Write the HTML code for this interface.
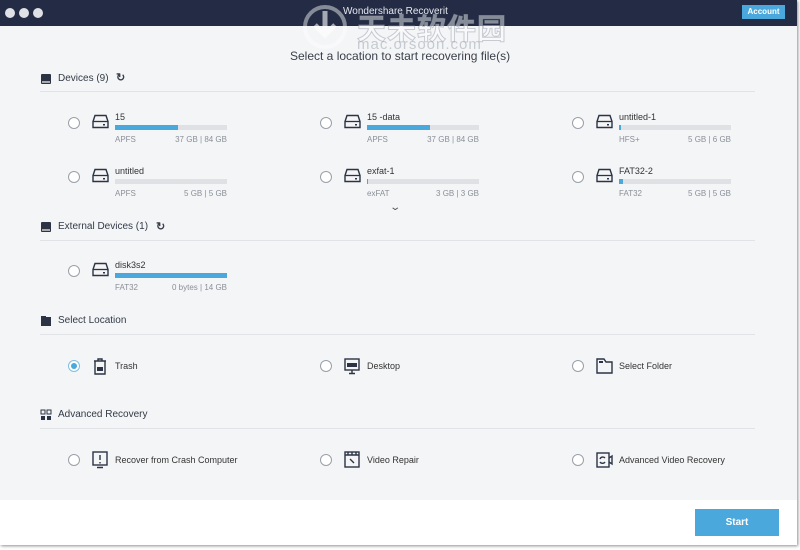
<!DOCTYPE html>
<html><head><meta charset="utf-8"><style>
*{margin:0;padding:0;box-sizing:border-box}
body{width:800px;height:550px;background:#fff;position:relative;overflow:hidden;font-family:"Liberation Sans","Noto Sans CJK SC",sans-serif;color:#3a3f4a}
#win{position:absolute;left:0;top:0;width:797px;height:545px;background:#f4f5f7;box-shadow:1px 1px 3px rgba(0,0,0,.45);overflow:hidden}
#tb{position:absolute;left:0;top:0;width:797px;height:26px;background:#232c44}
.dot{position:absolute;top:8px;width:10px;height:10px;border-radius:50%;background:#dfe1e6}
.abs{position:absolute;white-space:nowrap}
.hdr{font-size:10px;color:#333a46}
.line{position:absolute;left:40px;width:715px;height:1px;background:#e1e3e7}
.radio{position:absolute;width:12px;height:12px;border:1px solid #9aa0a8;border-radius:50%;background:#fff}
.name{font-size:9px;color:#333}
.meta{font-size:8px;color:#8a8f97}
.bar{position:absolute;height:5px;width:112px;background:#dfe1e5}
.bar i{display:block;height:5px;background:#4aa8dc}
#foot{position:absolute;left:0;top:500px;width:797px;height:45px;background:#fff}
#start{position:absolute;left:695px;top:509px;width:84px;height:27px;background:#4aa8dc;color:#fff;font-weight:bold;font-size:10px;text-align:center;line-height:27px}
</style></head><body>
<div id="win">
<div id="tb">
<div class="dot" style="left:5px"></div><div class="dot" style="left:19px"></div><div class="dot" style="left:33px"></div>
<div class="abs" style="left:343px;top:6px;font-size:10px;color:#e6e8ee">Wondershare Recoverit</div>
<div class="abs" style="left:742px;top:5px;width:43px;height:14px;background:#4aa8dc;color:#fff;font-size:8px;font-weight:bold;text-align:center;line-height:14px">Account</div>
</div>
<svg class="abs" style="left:300px;top:3px" width="50" height="46" viewBox="0 0 50 46"><circle cx="25" cy="24" r="20" fill="none" stroke="#fff" stroke-opacity=".45" stroke-width="4"/><path d="M15 22l10 10 10-10M25 8v22" stroke="#fff" stroke-opacity=".6" stroke-width="5" fill="none"/></svg>
<div class="abs" style="left:357px;top:6px;font-size:29px;font-weight:bold;color:rgba(255,255,255,.45);letter-spacing:1px;-webkit-text-stroke:1px rgba(150,160,170,.5)">天未软件园</div>
<div class="abs" style="left:357px;top:36px;font-size:15px;color:rgba(140,150,160,.45);letter-spacing:1px">mac.orsoon.com</div>
<div class="abs" style="left:290px;top:49px;font-size:12px;color:#3a3f4a">Select a location to start recovering file(s)</div>

<svg class="abs" style="left:40px;top:73px" width="12" height="12"><rect x="1" y="1" width="10" height="10" rx="1" fill="#2b3345"/><rect x="2" y="8" width="8" height="2" fill="#aaa"/></svg>
<div class="abs hdr" style="left:58px;top:73px">Devices (9)</div>
<div class="abs" style="left:116px;top:71px;font-size:11px;font-weight:bold">↻</div>
<div class="line" style="top:91px"></div>

<svg class="abs" style="left:40px;top:221px" width="12" height="12"><rect x="1" y="1" width="10" height="10" rx="1" fill="#2b3345"/><rect x="2" y="8" width="8" height="2" fill="#aaa"/></svg>
<div class="abs hdr" style="left:58px;top:221px">External Devices (1)</div>
<div class="abs" style="left:156px;top:220px;font-size:11px;font-weight:bold">↻</div>
<div class="line" style="top:240px"></div>

<svg class="abs" style="left:40px;top:315px" width="12" height="12"><rect x="1" y="2" width="10" height="9" fill="#2b3345"/><rect x="1" y="1" width="5" height="2" fill="#2b3345"/></svg>
<div class="abs hdr" style="left:58px;top:315px">Select Location</div>
<div class="line" style="top:334px"></div>

<svg class="abs" style="left:40px;top:409px" width="12" height="12"><rect x="1" y="1" width="4" height="4" fill="none" stroke="#2b3345"/><rect x="7" y="1" width="4" height="4" fill="none" stroke="#2b3345"/><rect x="1" y="7" width="4" height="4" fill="#2b3345"/><rect x="7" y="7" width="4" height="4" fill="#2b3345"/></svg>
<div class="abs hdr" style="left:58px;top:409px">Advanced Recovery</div>
<div class="line" style="top:428px"></div>

<div class="abs" style="left:391px;top:202px;font-size:10px;color:#555;transform:scaleX(1.4)">&#8964;</div>

<div id="drives"></div>

<div id="foot"></div>
<div id="start">Start</div>
</div>

<script>
var W=document.getElementById('drives');
var hd='<svg width="17" height="15" viewBox="0 0 17 15"><path d="M3 1.5h11l2 6v6h-15v-6z" fill="none" stroke="#2b3345" stroke-width="1.4"/><path d="M1 7.5h15" stroke="#2b3345" stroke-width="1.3"/><rect x="11" y="10" width="2" height="1.5" fill="#2b3345"/></svg>';
function drive(x,y,name,pct,fs,sz){
 var s='<div class="radio" style="left:'+(x)+'px;top:'+(y-3)+'px"></div>';
 s+='<div class="abs" style="left:'+(x+24)+'px;top:'+(y-6)+'px">'+hd+'</div>';
 s+='<div class="abs name" style="left:'+(x+47)+'px;top:'+(y-8)+'px">'+name+'</div>';
 s+='<div class="bar" style="left:'+(x+47)+'px;top:'+(y+5)+'px"><i style="width:'+pct+'%"></i></div>';
 s+='<div class="abs meta" style="left:'+(x+47)+'px;top:'+(y+15)+'px">'+fs+'</div>';
 s+='<div class="abs meta" style="left:'+(x+47)+'px;width:112px;text-align:right;top:'+(y+15)+'px">'+sz+'</div>';
 return s;}
var h='';
h+=drive(68,120,'15',56,'APFS','37 GB | 84 GB');
h+=drive(320,120,'15 -data',56,'APFS','37 GB | 84 GB');
h+=drive(572,120,'untitled-1',2,'HFS+','5 GB | 6 GB');
h+=drive(68,174,'untitled',0,'APFS','5 GB | 5 GB');
h+=drive(320,174,'exfat-1',1,'exFAT','3 GB | 3 GB');
h+=drive(572,174,'FAT32-2',4,'FAT32','5 GB | 5 GB');
h+=drive(68,268,'disk3s2',100,'FAT32','0 bytes | 14 GB');
function item(x,y,label,icon,sel){
 var s='<div class="radio" style="left:'+x+'px;top:'+(y-6)+'px;'+(sel?'border-color:#7fbfe0;':'')+'">'+(sel?'<div style="position:absolute;left:2px;top:2px;width:6px;height:6px;border-radius:50%;background:#4aa8dc"></div>':'')+'</div>';
 s+='<div class="abs" style="left:'+(x+24)+'px;top:'+(y-9)+'px">'+icon+'</div>';
 s+='<div class="abs name" style="left:'+(x+47)+'px;top:'+(y-5)+'px">'+label+'</div>';
 return s;}
var st='stroke="#2b3345" stroke-width="1.4" fill="none"';
var trash='<svg width="16" height="18"><path d="M2 4h12M6 4V2h4v2M3 4v13h10V4" '+st+'/><rect x="5" y="10" width="6" height="4" fill="#2b3345"/></svg>';
var desk='<svg width="16" height="18"><rect x="1" y="2" width="14" height="11" '+st+'/><rect x="3" y="6" width="10" height="4" fill="#2b3345"/><path d="M8 13v3M5 16.5h6" '+st+'/></svg>';
var fold='<svg width="17" height="17"><path d="M1 2h7l2 3h6v11H1z" '+st+'/><rect x="3" y="4" width="4" height="2" fill="#2b3345"/></svg>';
var crash='<svg width="16" height="18"><rect x="1" y="1" width="14" height="13" '+st+'/><path d="M8 4v5M8 11v1.5M5 16.5h6" '+st+'/></svg>';
var vid='<svg width="16" height="17"><rect x="1" y="1" width="14" height="15" '+st+'/><path d="M1 4h14M4 1v3M8 1v3M12 1v3M6 8l4 4" '+st+'/></svg>';
var avr='<svg width="17" height="18"><rect x="1" y="2" width="12" height="14" '+st+'/><path d="M13 7l3-2v8l-3-2M4 8a3 3 0 0 1 5-1M9 11a3 3 0 0 1-5 0" '+st+'/></svg>';
h+=item(68,366,'Trash',trash,true);
h+=item(320,366,'Desktop',desk);
h+=item(572,366,'Select Folder',fold);
h+=item(68,460,'Recover from Crash Computer',crash);
h+=item(320,460,'Video Repair',vid);
h+=item(572,460,'Advanced Video Recovery',avr);
W.innerHTML=h;
</script>
</body></html>
